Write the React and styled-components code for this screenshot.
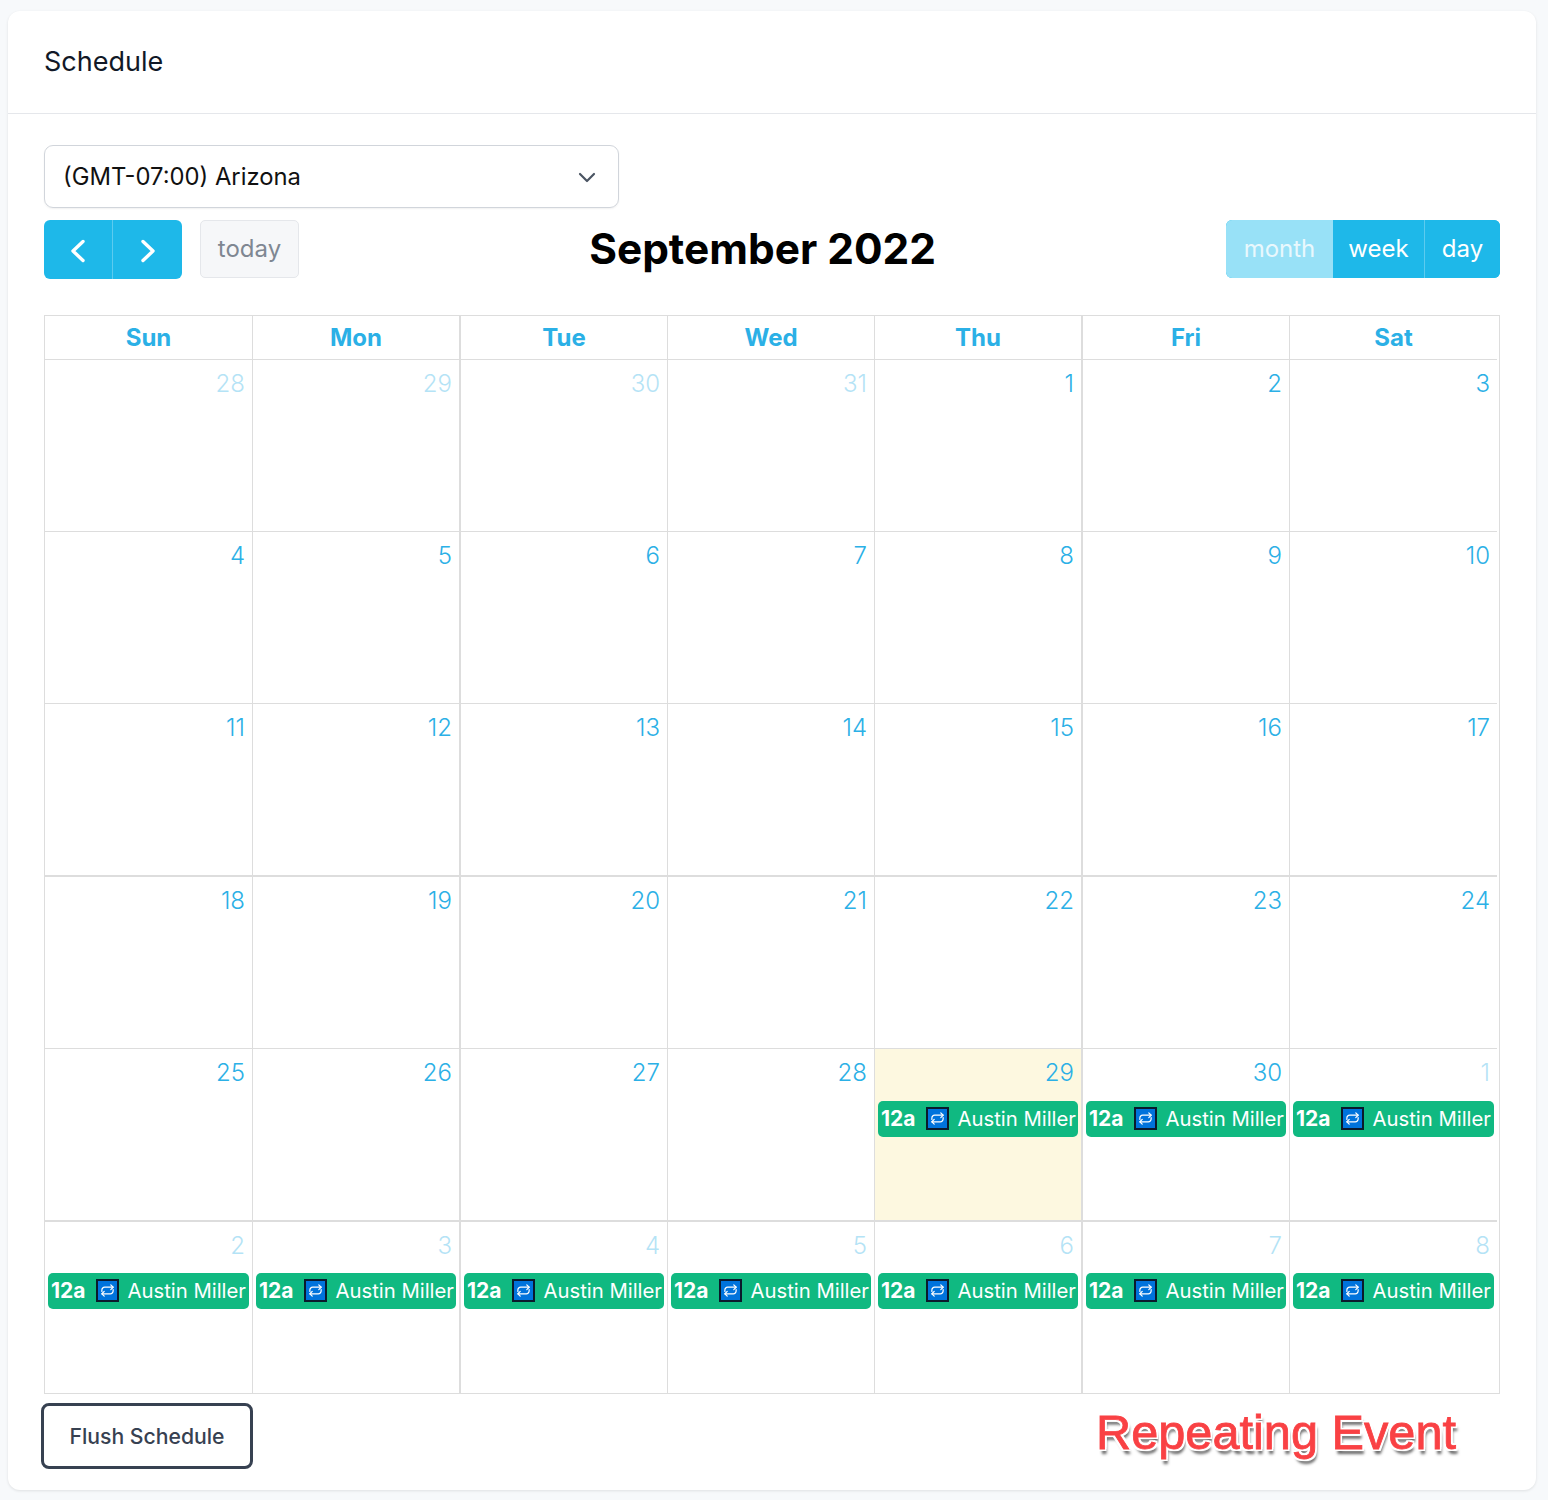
import React from 'react';
import styled, { createGlobalStyle } from 'styled-components';

const GlobalStyle = createGlobalStyle`
    html, body {
        margin: 0;
        padding: 0;
        background: #f7f9fb;
        font-family: Inter, "Liberation Sans", sans-serif;
    }
    * {
        box-sizing: border-box;
    }
`;

const Page = styled.div`
    width: 1548px;
    height: 1500px;
    padding: 11px 12px 10px 8px;
`;

const Card = styled.div`
    height: 1479px;
    background: #fff;
    border-radius: 12px;
    box-shadow: 0 1px 3px rgba(0, 0, 0, 0.1);
`;

const CardHeader = styled.div`
    height: 103px;
    padding: 0 0 2px 36px;
    display: flex;
    align-items: center;
    border-bottom: 1px solid #e5e7eb;
    font-size: 27px;
    font-weight: 400;
    color: #111827;
`;

const CardBody = styled.div`
    padding: 31px 36px 0;
`;

const Select = styled.div`
    width: 575px;
    height: 63px;
    padding: 0 21px 0 18px;
    display: flex;
    align-items: center;
    justify-content: space-between;
    border: 1px solid #d1d5db;
    border-radius: 9px;
    box-shadow: 0 1px 2px rgba(0, 0, 0, 0.06);
    font-size: 23.8px;
    color: #111;
`;

const Toolbar = styled.div`
    margin-top: 12px;
    height: 59px;
    display: flex;
    align-items: flex-start;
    justify-content: space-between;
`;

const ToolbarLeft = styled.div`
    display: flex;
    gap: 18px;
    width: 255px;
`;

const ButtonGroup = styled.div`
    display: flex;
    border-radius: 6px;
    overflow: hidden;
    background: #1eb8e9;
`;

const ArrowButton = styled.div`
    width: ${props => props.$divided ? '70px' : '68px'};
    height: 59px;
    display: flex;
    align-items: center;
    justify-content: center;
    padding-top: 2px;
    border-left: ${props => props.$divided ? '1px solid #5ccbef' : 'none'};
    color: #fff;
`;

const TodayButton = styled.div`
    width: 99px;
    height: 58px;
    padding-bottom: 2px;
    display: flex;
    align-items: center;
    justify-content: center;
    background: #f6f7f9;
    border: 1px solid #e5e7eb;
    border-radius: 5px;
    font-size: 24px;
    color: #7f8792;
`;

const Title = styled.h2`
    margin: 0;
    height: 58px;
    line-height: 58px;
    font-size: 42.4px;
    font-weight: 700;
    color: #000;
`;

const ViewButton = styled.div`
    width: ${props => props.$width}px;
    height: 58px;
    padding-bottom: 2px;
    display: flex;
    align-items: center;
    justify-content: center;
    font-size: 24px;
    color: ${props => props.$active ? '#e9f8fd' : '#fff'};
    background: ${props => props.$active ? '#98e1f7' : '#1eb8e9'};
    border-left: ${props => props.$divided ? '1px solid #5ccbef' : 'none'};
`;

const Calendar = styled.div`
    margin-top: 36px;
    width: 1456px;
    border: 1px solid #ddd;
    display: grid;
    grid-template-columns: 207px 207px 208px 207px 207px 208px 208px;
    grid-template-rows: 44px 172px 172px 173px 172px 173px 171px;
`;

const DayName = styled.div`
    display: flex;
    align-items: center;
    justify-content: center;
    border-bottom: 1px solid #ddd;
    border-left: ${props => props.$first ? 'none' : `${props.$thick ? 2 : 1}px solid #ddd`};
    font-size: 24px;
    font-weight: 700;
    color: #2bb0e6;
`;

const DayCell = styled.div`
    padding: 3px 3px 0;
    min-width: 0;
    border-bottom: ${props => props.$last ? 'none' : `${props.$thickBottom ? 2 : 1}px solid #ddd`};
    border-left: ${props => props.$first ? 'none' : `${props.$thick ? 2 : 1}px solid #ddd`};
    background: ${props => props.$today ? '#fdf8e0' : 'transparent'};
`;

const DayNumber = styled.div`
    height: 38px;
    padding: 6px 4px 0 0;
    text-align: right;
    font-size: 24px;
    line-height: 30px;
    font-weight: 300;
    color: #2bb0e6;
    opacity: ${props => props.$muted ? 0.35 : 1};
`;

const Event = styled.div`
    margin-top: ${props => props.$tight ? 10 : 11}px;
    height: 36px;
    padding: 0 3px 2px;
    display: flex;
    align-items: center;
    background: #10b981;
    border-radius: 5px;
    font-size: 20.3px;
    color: #fff;
    white-space: nowrap;
    overflow: hidden;
`;

const EventTime = styled.b`
    font-size: 21px;
    font-weight: 700;
`;

const RepeatBadge = styled.span`
    margin: 0 8px 0 11px;
    width: 23px;
    height: 23px;
    flex: none;
    display: flex;
    align-items: center;
    justify-content: center;
    background: #0073dc;
    border: 2px solid #0a1a2c;
    color: #fff;
`;

const Footer = styled.div`
    margin: 9px 0 0 -3px;
    display: flex;
    align-items: center;
    justify-content: space-between;
`;

const FlushButton = styled.button`
    width: 212px;
    height: 66px;
    padding: 0;
    background: #fff;
    border: 3px solid #374151;
    border-radius: 8px;
    font-family: inherit;
    font-size: 21.2px;
    font-weight: 500;
    color: #374151;
`;

const Annotation = styled.div`
    margin: -8px 44px 0 0;
    font-family: "Liberation Sans", Arial, sans-serif;
    font-size: 48.7px;
    color: #f94144;
    -webkit-text-stroke: 0.8px #f94144;
    text-shadow:
        2px 0 0 #fff, -2px 0 0 #fff, 0 2px 0 #fff, 0 -2px 0 #fff,
        2px 2px 0 #fff, -2px 2px 0 #fff, 2px -2px 0 #fff, -2px -2px 0 #fff,
        2px 5px 3px rgba(0, 0, 0, 0.6);
`;

const dayNames = ['Sun', 'Mon', 'Tue', 'Wed', 'Thu', 'Fri', 'Sat'];

const prevMonth = [28, 29, 30, 31];
const thisMonth = Array.from({ length: 30 }, (_, i) => i + 1);
const nextMonth = [1, 2, 3, 4, 5, 6, 7, 8];

const days = [
    ...prevMonth.map(n => ({ n, muted: true })),
    ...thisMonth.map(n => ({ n, event: n >= 29, today: n === 29 })),
    ...nextMonth.map(n => ({ n, muted: true, event: true })),
];

// the Tue and Fri columns, the 3rd and 5th rows have a heavier line in the picture
const isThickColumn = i => i % 7 === 2 || i % 7 === 5;
const isThickRow = i => Math.floor(i / 7) === 2 || Math.floor(i / 7) === 4;

const Chevron = ({ d }) => (
    <svg width="28" height="28" viewBox="0 0 28 28" fill="none" stroke="currentColor" strokeWidth="3.4" strokeLinecap="round" strokeLinejoin="round">
        <path d={d} />
    </svg>
);

const RepeatIcon = () => (
    <svg width="15" height="15" viewBox="0 0 16 16" fill="none" stroke="currentColor" strokeWidth="1.3" strokeLinecap="round" strokeLinejoin="round">
        <path d="M2 9V7.5A3 3 0 0 1 5 4.5h9" />
        <path d="M11.5 2L14 4.5 11.5 7" />
        <path d="M14 7v1.5a3 3 0 0 1-3 3H2" />
        <path d="M4.5 9L2 11.5 4.5 14" />
    </svg>
);

const App = () => {
    return (
        <Page>
            <GlobalStyle />
            <Card>
                <CardHeader>Schedule</CardHeader>
                <CardBody>
                    <Select>
                        <span>(GMT-07:00) Arizona</span>
                        <svg width="20" height="20" viewBox="0 0 20 20" fill="none" stroke="#4b5563" strokeWidth="2.2" strokeLinecap="round" strokeLinejoin="round">
                            <path d="M3 7l7 7 7-7" />
                        </svg>
                    </Select>
                    <Toolbar>
                        <ToolbarLeft>
                            <ButtonGroup>
                                <ArrowButton><Chevron d="M19 4.5 9 14l10 9.5" /></ArrowButton>
                                <ArrowButton $divided><Chevron d="M9 4.5 19 14 9 23.5" /></ArrowButton>
                            </ButtonGroup>
                            <TodayButton>today</TodayButton>
                        </ToolbarLeft>
                        <Title>September 2022</Title>
                        <ButtonGroup>
                            <ViewButton $active $width={107}>month</ViewButton>
                            <ViewButton $width={91}>week</ViewButton>
                            <ViewButton $divided $width={76}>day</ViewButton>
                        </ButtonGroup>
                    </Toolbar>
                    <Calendar>
                        {dayNames.map((name, i) => (
                            <DayName key={name} $first={i === 0} $thick={isThickColumn(i)}>{name}</DayName>
                        ))}
                        {days.map((day, i) => (
                            <DayCell
                                key={i}
                                $first={i % 7 === 0}
                                $last={i >= 35}
                                $thick={isThickColumn(i)}
                                $thickBottom={isThickRow(i)}
                                $today={day.today}
                            >
                                <DayNumber $muted={day.muted}>{day.n}</DayNumber>
                                {day.event && (
                                    <Event $tight={i >= 35}>
                                        <EventTime>12a</EventTime>
                                        <RepeatBadge><RepeatIcon /></RepeatBadge>
                                        <span>Austin Miller</span>
                                    </Event>
                                )}
                            </DayCell>
                        ))}
                    </Calendar>
                    <Footer>
                        <FlushButton>Flush Schedule</FlushButton>
                        <Annotation>Repeating Event</Annotation>
                    </Footer>
                </CardBody>
            </Card>
        </Page>
    );
};

export default App;
